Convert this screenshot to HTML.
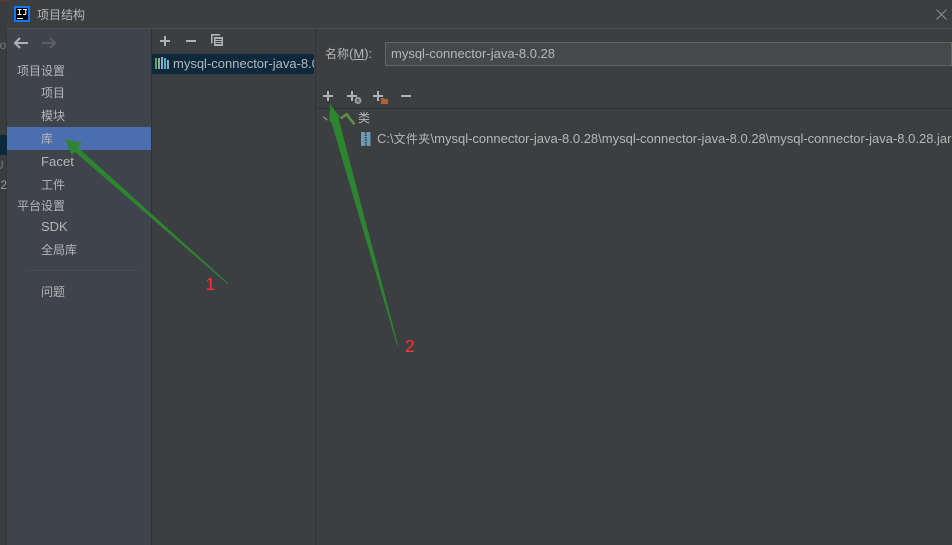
<!DOCTYPE html>
<html><head><meta charset="utf-8">
<style>
html,body{margin:0;padding:0;background:#3c3f41}
#r{position:relative;width:952px;height:545px;overflow:hidden;background:#3c3f41;font-family:"Liberation Sans","Noto Sans CJK SC",sans-serif;font-size:12px;color:#b6b6b6}
.a{position:absolute}
.t{position:absolute;white-space:nowrap;line-height:16px}
svg{position:absolute;left:0;top:0}
</style></head><body><div id="r">
<div class="a" style="left:0;top:0;width:7px;height:545px;background:#3a3c3d"></div>
<div class="a" style="left:6px;top:29px;width:1px;height:516px;background:#333536"></div>
<div class="a" style="left:0;top:135px;width:7px;height:20px;background:#0d293e"></div>
<div class="a" style="left:0;top:0;width:7px;height:2px;background:#5a3a3a"></div>
<div class="t" style="left:-3px;top:37px;color:#77797a">lo</div>
<div class="t" style="left:-5px;top:157px;color:#77797a">U</div>
<div class="t" style="left:-3px;top:177px;color:#99a">.2</div>
<div class="a" style="left:7px;top:28px;width:945px;height:1px;background:#4c4e50"></div>
<div class="a" style="left:7px;top:29px;width:144px;height:516px;background:#3e434c"></div>
<div class="a" style="left:7px;top:127px;width:144px;height:23px;background:#4b6eaf"></div>
<div class="a" style="left:151px;top:29px;width:1px;height:516px;background:#323232"></div>
<div class="a" style="left:315px;top:29px;width:1px;height:516px;background:#323232"></div>
<div class="a" style="left:152px;top:54px;width:162px;height:20px;background:#0d293e"></div>
<div class="a" style="left:316px;top:108px;width:636px;height:1px;background:#323232"></div>
<div class="a" style="left:385px;top:42px;width:565px;height:22px;background:#45494a;border:1px solid #646464"></div>
<div class="a" style="left:14px;top:6px;width:12px;height:12px;background:#000;border:2px solid #087cfa"></div>

<div class="t" style="left:37px;top:7px">项目结构</div>
<div class="t" style="left:17px;top:63px">项目设置</div>
<div class="t" style="left:41px;top:85px">项目</div>
<div class="t" style="left:41px;top:108px">模块</div>
<div class="t" style="left:41px;top:131px">库</div>
<div class="t" style="left:41px;top:154px;font-size:13px;letter-spacing:.1px">Facet</div>
<div class="t" style="left:41px;top:177px">工件</div>
<div class="t" style="left:17px;top:198px">平台设置</div>
<div class="t" style="left:41px;top:219px;font-size:13px">SDK</div>
<div class="t" style="left:41px;top:242px">全局库</div>
<div class="t" style="left:41px;top:284px">问题</div>
<div class="a" style="left:26px;top:270px;width:112px;height:1px;background:#4a4d4f"></div>

<div class="a" style="left:173px;top:54px;width:141px;height:20px;overflow:hidden"><div class="t" style="left:0;top:2px;font-size:13px">mysql-connector-java-8.0.28</div></div>
<div class="t" style="left:325px;top:46px">名称<span style="font-size:13px">(<span style="text-decoration:underline">M</span>):</span></div>
<div class="t" style="left:391px;top:46px;font-size:13px">mysql-connector-java-8.0.28</div>
<div class="t" style="left:358px;top:110px">类</div>
<div class="t" style="left:377px;top:131px;font-size:13px">C:\<span style="font-size:12px;letter-spacing:.3px">文件夹</span>\mysql-connector-java-8.0.28\mysql-connector-java-8.0.28\mysql-connector-java-8.0.28.jar</div>

<svg width="952" height="545" viewBox="0 0 952 545" fill="none">
<!-- logo letters -->
<path d="M17.500 9.500h4M19.500 9.500v5M17.500 14.500h4M23 9.500h4M25.800 9.500v4.300q0 .8-1 .8H23" stroke="#fff" stroke-width="1.100"/>
<path d="M17 18.500h6" stroke="#fff" stroke-width="1"/>
<!-- close -->
<path d="M936.500 9.500l10 10M946.500 9.500l-10 10" stroke="#8f9193" stroke-width="1"/>
<!-- back/forward -->
<path d="M15 43h13M20 38l-5 5 5 5" stroke="#afb1b3" stroke-width="2"/>
<path d="M42 43h13M50 38l5 5-5 5" stroke="#5b5f63" stroke-width="2"/>
<!-- middle toolbar -->
<path d="M160 41h10M165 36v10M186 41h10" stroke="#afb1b3" stroke-width="2"/>
<path d="M220 34.800h-8.200v8.700" stroke="#afb1b3" stroke-width="1.600"/>
<rect x="214" y="37" width="9" height="9" fill="#afb1b3"/>
<path d="M215.500 39.500h6M215.500 41.500h6M215.500 43.500h6" stroke="#3c3f41" stroke-width="1"/>
<!-- lib icon -->
<path d="M156 58v11" stroke="#62a543" stroke-width="2"/>
<path d="M159 58v11" stroke="#9aa7b0" stroke-width="2"/>
<path d="M162 57v12" stroke="#9aa7b0" stroke-width="2"/>
<path d="M165 58v11" stroke="#40b6e0" stroke-width="2"/>
<path d="M168 60v9" stroke="#9aa7b0" stroke-width="2"/>
<!-- right toolbar -->
<path d="M323 96h10M328 91v10M347 96h10M352 91v10M373 96h10M378 91v10M401 96h10" stroke="#afb1b3" stroke-width="2"/>
<circle cx="358" cy="100.500" r="3.500" fill="#9a9c9e"/>
<circle cx="358" cy="100.500" r="1.500" fill="#5c5f61"/>
<path d="M381 98h3l1 1h3v5h-7z" fill="#b4602e"/>
<!-- chevron + hammer -->
<path d="M323.300 116.700l4 3.500" stroke="#9a9c9e" stroke-width="1.200"/>
<path d="M340.700 118.300l6-4 7.600 10" stroke="#5f8f3e" stroke-width="2.600"/>
<!-- jar -->
<rect x="361" y="132" width="9.500" height="14" fill="#6f9bb0"/>
<path d="M365.800 132v14" stroke="#2f4a57" stroke-width="2" stroke-dasharray="1.500 1"/>
<!-- arrows -->
<path d="M65 139.300L82.700 143.300 77.500 147 228 283 227 283.500 75 152 71.700 155Z" fill="#2e8530"/>
<path d="M330 104L340 117 338.500 118.500 398 345 397 345 331.500 122.500 329.500 121Z" fill="#2e8530"/>
</svg>
<div class="t" style="left:205.500px;top:274.700px;font-size:17.500px;line-height:18px;color:#ff3333">1</div>
<div class="t" style="left:405px;top:337.400px;font-size:17.500px;line-height:18px;color:#ff3333">2</div>
</div></body></html>
